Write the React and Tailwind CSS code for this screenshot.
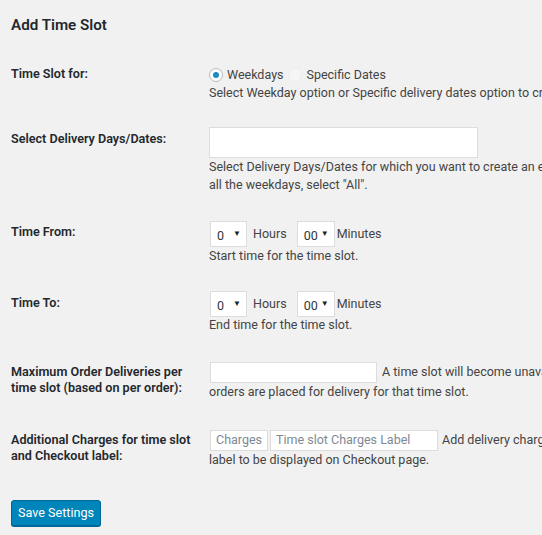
import React from "react";

const font = { fontFamily: "Roboto, 'Noto Sans', Arial, sans-serif" };

function Select({ value, w }) {
  return (
    <div className={`flex h-[26px] shrink-0 items-center justify-between border border-[#ddd] bg-white pl-[6px] pr-[5px] ${w}`}>
      <span className="mt-[4px] text-[12.5px] text-[#32373c]">{value}</span>
      <span className="text-[8px] leading-none text-[#222]">▼</span>
    </div>
  );
}

function Row({ label, children, labelPad, mt }) {
  return (
    <div className={`flex ${mt}`}>
      <div className={`w-[198px] shrink-0 text-[12.6px] font-semibold leading-4 text-[#23282d] ${labelPad}`}>
        {label}
      </div>
      <div className="min-w-0 flex-1 whitespace-nowrap text-[12.5px] leading-[18px] text-[#444]">{children}</div>
    </div>
  );
}

export default function App() {
  return (
    <div className="h-[535px] w-[542px] overflow-hidden bg-[#f1f1f1] px-[11px]" style={font}>
      <h2 className="pt-[15px] text-[15.2px] font-semibold leading-5 text-[#23282d]">Add Time Slot</h2>

      <Row label="Time Slot for:" labelPad="pt-[1px]" mt="mt-[30px]">
        <div className="mt-[1px] flex h-[18px] items-center">
          <span className="flex h-[14px] w-[14px] shrink-0 items-center justify-center rounded-full border border-[#b4b9be] bg-white">
            <span className="h-[6px] w-[6px] rounded-full bg-[#1e8cbe]"></span>
          </span>
          <span className="ml-[4px]">Weekdays</span>
          <span className="ml-[4px] h-[14px] w-[14px] shrink-0 rounded-full border border-[#ececec] bg-[#f6f6f6]"></span>
          <span className="ml-[5px]">Specific Dates</span>
        </div>
        <div>Select Weekday option or Specific delivery dates option to create a time slot.</div>
      </Row>

      <Row label="Select Delivery Days/Dates:" labelPad="pt-[4px]" mt="mt-[25px]">
        <div className="h-[31px] w-[269px] border border-[#ddd] bg-white"></div>
        <div>
          Select Delivery Days/Dates for which you want to create an exclusive Time Slot. To select
          <br />
          all the weekdays, select "All".
        </div>
      </Row>

      <Row label="Time From:" labelPad="pt-[3px]" mt="mt-[27px]">
        <div className="flex h-[26px] items-center pl-[1px]">
          <Select value="0" w="w-[37px]" />
          <span className="ml-[6px] mb-[1px]">Hours</span>
          <span className="ml-[10px]"><Select value="00" w="w-[38px]" /></span>
          <span className="ml-[2px] mb-[1px]">Minutes</span>
        </div>
        <div>Start time for the time slot.</div>
      </Row>

      <Row label="Time To:" labelPad="pt-[4px]" mt="mt-[26px]">
        <div className="flex h-[26px] items-center pl-[1px]">
          <Select value="0" w="w-[37px]" />
          <span className="ml-[6px] mb-[1px]">Hours</span>
          <span className="ml-[10px]"><Select value="00" w="w-[38px]" /></span>
          <span className="ml-[2px] mb-[1px]">Minutes</span>
        </div>
        <div className="mt-[-1px]">End time for the time slot.</div>
      </Row>

      <Row
        label={<>Maximum Order Deliveries per<br />time slot (based on per order):</>}
        labelPad="pt-[3px]"
        mt="mt-[27px]"
      >
        <div className="flex h-[22px] items-center pl-[1px]">
          <div className="h-[21px] w-[167px] shrink-0 border border-[#ddd] bg-white"></div>
          <span className="ml-[5px]">A time slot will become unavailable for further deliveries once these many</span>
        </div>
        <div>orders are placed for delivery for that time slot.</div>
      </Row>

      <Row
        label={<>Additional Charges for time slot<br />and Checkout label:</>}
        labelPad="pt-[3px]"
        mt="mt-[28px]"
      >
        <div className="flex h-[22px] items-center pl-[1px]">
          <div className="flex h-[21px] w-[58px] shrink-0 items-center border border-[#ddd] bg-white pl-[5px] text-[#7e8993]">Charges</div>
          <div className="ml-[2px] flex h-[21px] w-[168px] shrink-0 items-center border border-[#ddd] bg-white pl-[5px] text-[#7e8993]">Time slot Charges Label</div>
          <span className="ml-[4px]">Add delivery charges (if applicable) for this time slot and a Checkout</span>
        </div>
        <div>label to be displayed on Checkout page.</div>
      </Row>

      <button className="mt-[31px] flex h-[26px] w-[90px] items-center justify-center rounded-[3px] border border-[#006799] bg-[#0085ba] text-[12.6px] leading-none text-white shadow-[0_1px_0_#006799]">
        Save Settings
      </button>
    </div>
  );
}
